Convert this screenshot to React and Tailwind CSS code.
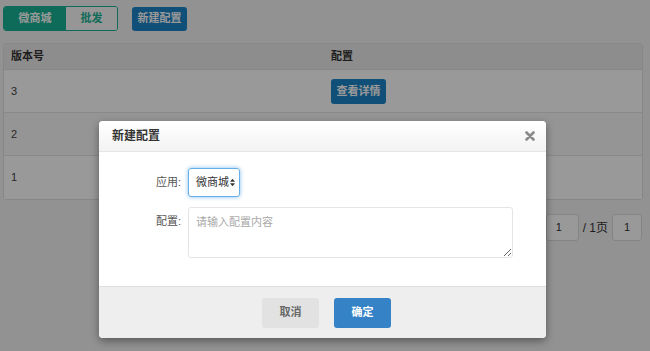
import { useState } from "react";

const rows = ["3", "2", "1"];

export default function App() {
  const [tab, setTab] = useState("wsc");
  const [showModal, setShowModal] = useState(true);

  return (
    <div
      className="relative w-[650px] h-[351px] overflow-hidden bg-[#f3f3f4] text-[#333]"
      style={{ fontFamily: '"Liberation Sans", "Noto Sans CJK SC", sans-serif' }}
    >
      {/* Page */}
      <div className="px-[3px] pt-[6px]">
        <div className="flex items-center gap-[14px]">
          <div className="flex h-[25px] rounded-[3px] border border-[#1ab394] overflow-hidden text-[11px] font-bold">
            <button
              onClick={() => setTab("wsc")}
              className={`w-[62px] ${tab === "wsc" ? "bg-[#1ab394] text-white" : "bg-white text-[#1ab394]"}`}
            >
              微商城
            </button>
            <button
              onClick={() => setTab("pf")}
              className={`w-[51px] ${tab === "pf" ? "bg-[#1ab394] text-white" : "bg-[#fafafa] text-[#1ab394]"}`}
            >
              批发
            </button>
          </div>
          <button
            onClick={() => setShowModal(true)}
            className="h-[24px] w-[55px] rounded-[3px] bg-[#1c84c6] text-white text-[11px] font-bold"
          >
            新建配置
          </button>
        </div>

        {/* Table */}
        <div className="mt-[12px] w-[640px] rounded-[3px] border border-[#e2e2e2] bg-white text-[11px] text-[#444]">
          <div className="flex h-[26px] items-center bg-[#ebebeb] border-b border-[#e0e0e0] font-bold text-[#333]">
            <div className="w-[327px] pl-[7px]">版本号</div>
            <div>配置</div>
          </div>
          {rows.map((r, i) => (
            <div
              key={r}
              className={`flex h-[43px] items-center ${i < rows.length - 1 ? "border-b border-[#e4e4e4]" : ""} ${i === 1 ? "bg-[#f9f9f9]" : "bg-white"}`}
            >
              <div className="w-[327px] pl-[7px]">{r}</div>
              <button className="h-[25px] w-[55px] rounded-[3px] bg-[#1c84c6] text-white text-[11px] font-bold">
                查看详情
              </button>
            </div>
          ))}
        </div>

        {/* Pagination */}
        <div className="mt-[14px] flex items-center justify-end pr-[5px] text-[11px]">
          <div className="flex h-[27px] w-[33px] items-center rounded-[3px] border border-[#ddd] bg-white pl-[9px]">1</div>
          <span className="ml-[4px] mr-[4px] text-[12px]">/ 1页</span>
          <div className="flex h-[27px] w-[30px] items-center justify-center rounded-[3px] border border-[#ddd] bg-white">1</div>
        </div>
      </div>

      {/* Backdrop + modal */}
      {showModal && (
        <>
          <div className="absolute inset-0 bg-black/40" />
          <div className="absolute left-[99px] top-[121px] w-[447px] rounded-[4px] bg-white shadow-[0_3px_9px_rgba(0,0,0,0.4)] overflow-hidden">
            <div className="flex h-[31px] items-center justify-between border-b border-[#e5e5e5] bg-gradient-to-b from-[#ffffff] to-[#f3f3f3] pl-[13px] pr-[11px]">
              <span className="text-[12px] font-bold text-[#333]">新建配置</span>
              <button onClick={() => setShowModal(false)} className="flex items-center">
                <svg width="10" height="10" viewBox="0 0 10 10">
                  <path d="M1.5 1.5 L8.5 8.5 M8.5 1.5 L1.5 8.5" stroke="#8a8a8a" strokeWidth="2.6" strokeLinecap="round" />
                </svg>
              </button>
            </div>
            <div className="h-[134px] pt-[16px]">
              <div className="flex items-center">
                <label className="w-[82px] text-right text-[11px] text-[#555]">应用:</label>
                <div className="ml-[7px] flex h-[29px] w-[52px] items-center justify-between whitespace-nowrap rounded-[3px] border border-[#66afe9] shadow-[0_0_4px_rgba(102,175,233,0.8)] pl-[7px] pr-[4px] text-[11px] text-[#333]">
                  <span>微商城</span>
                  <svg width="5" height="9" viewBox="0 0 6 10">
                    <path d="M0 4 L3 0.5 L6 4 Z" fill="#333" />
                    <path d="M0 6 L3 9.5 L6 6 Z" fill="#333" />
                  </svg>
                </div>
              </div>
              <div className="mt-[10px] flex items-start">
                <label className="w-[82px] pt-[6px] text-right text-[11px] text-[#555]">配置:</label>
                <textarea
                  placeholder="请输入配置内容"
                  className="ml-[7px] h-[51px] w-[325px] rounded-[3px] border border-[#e5e5e5] px-[7px] py-[6px] text-[11px] placeholder:text-[#aaa] outline-none"
                />
              </div>
            </div>
            <div className="flex h-[52px] items-center justify-center gap-[15px] border-t border-[#e0e0e0] bg-[#eeeeee] pl-[8px]">
              <button
                onClick={() => setShowModal(false)}
                className="h-[30px] w-[57px] rounded-[3px] bg-[#e2e2e2] text-[11px] font-bold text-[#666]"
              >
                取消
              </button>
              <button className="h-[30px] w-[57px] rounded-[3px] bg-[#3583c6] text-[11px] font-bold text-white">
                确定
              </button>
            </div>
          </div>
        </>
      )}
    </div>
  );
}
